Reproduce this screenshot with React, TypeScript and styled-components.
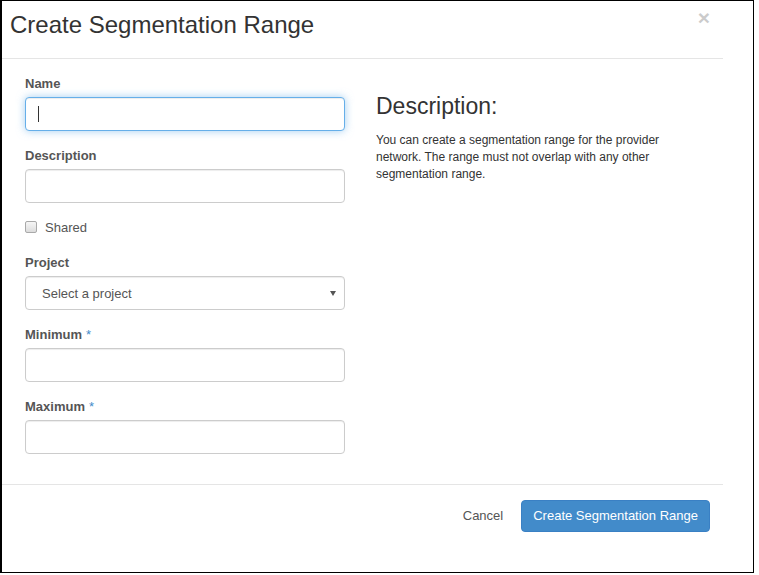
import React from 'react'
import styled, { createGlobalStyle } from 'styled-components'

const GlobalStyle = createGlobalStyle`
  html, body {
    margin: 0;
    padding: 0;
    background: #fff;
  }
  body {
    font-family: "Liberation Sans", Arial, Helvetica, sans-serif;
    color: #333;
  }
`

const Frame = styled.div`
  box-sizing: border-box;
  width: 754px;
  height: 573px;
  border: 1px solid #000;
  border-left-width: 2px;
  overflow: hidden;
  background: #fff;
`

const Modal = styled.div`
  width: 721px;
`

const Header = styled.div`
  box-sizing: border-box;
  height: 58px;
  display: flex;
  justify-content: space-between;
  align-items: flex-start;
  padding: 11px 13px 0 8px;
  border-bottom: 1px solid #e5e5e5;
`

const Title = styled.h4`
  margin: 0;
  font-size: 24px;
  line-height: 26px;
  font-weight: 400;
  color: #333;
`

const CloseButton = styled.button`
  margin-top: -5px;
  padding: 0;
  border: 0;
  background: transparent;
  font-family: inherit;
  font-size: 21px;
  font-weight: bold;
  line-height: 1;
  color: #000;
  opacity: 0.2;
  cursor: pointer;
`

const Body = styled.div`
  display: grid;
  grid-template-columns: 320px 1fr;
  column-gap: 31px;
  padding: 15px 23px;
`

const FormColumn = styled.div`
  display: flex;
  flex-direction: column;
`

const FormGroup = styled.div`
  margin-bottom: 15px;
`

const Label = styled.label`
  display: block;
  padding-top: 1px;
  margin-bottom: 4px;
  font-size: 13px;
  line-height: 18px;
  font-weight: bold;
  color: #555;
`

const Required = styled.span`
  margin-left: 4px;
  font-weight: normal;
  color: #428bca;
`

const TextBox = styled.div<{ $focused?: boolean }>`
  box-sizing: border-box;
  width: 320px;
  height: 34px;
  display: flex;
  align-items: center;
  padding: 0 12px;
  border: 1px solid ${(p) => (p.$focused ? '#66afe9' : '#ccc')};
  border-radius: 4px;
  background: #fff;
  box-shadow: ${(p) =>
    p.$focused
      ? 'inset 0 1px 1px rgba(0,0,0,.075), 0 0 8px rgba(102,175,233,.6)'
      : 'inset 0 1px 1px rgba(0,0,0,.075)'};
`

const Caret = styled.span`
  width: 1px;
  height: 16px;
  margin-top: -1px;
  background: #333;
`

const SelectBox = styled(TextBox)`
  justify-content: space-between;
  padding: 0 8px 0 16px;
  font-size: 13px;
  color: #555;
`

const CheckRow = styled.label`
  display: flex;
  align-items: center;
  gap: 8px;
  height: 18px;
  margin-bottom: 17px;
  font-size: 13px;
  color: #555;
`

const CheckBox = styled.span`
  box-sizing: border-box;
  width: 12px;
  height: 12px;
  border: 1px solid #a9a9a9;
  border-radius: 2px;
  background: linear-gradient(#f6f6f6, #dcdcdc);
`

const InfoColumn = styled.div`
  color: #333;
`

const InfoTitle = styled.h3`
  margin: 20px 0 13px;
  font-size: 23px;
  line-height: 25px;
  font-weight: 400;
`

const InfoText = styled.p`
  margin: 0;
  font-size: 12px;
  line-height: 17px;
`

const Footer = styled.div`
  display: flex;
  justify-content: flex-end;
  align-items: center;
  gap: 6px;
  padding: 15px 13px 0;
  border-top: 1px solid #e5e5e5;
`

const Button = styled.button<{ $primary?: boolean }>`
  padding: 6px 11px;
  font-family: inherit;
  font-size: 13px;
  line-height: 18px;
  border-radius: 4px;
  border: 1px solid ${(p) => (p.$primary ? '#3a80c4' : 'transparent')};
  background: ${(p) => (p.$primary ? '#428bca' : 'transparent')};
  color: ${(p) => (p.$primary ? '#fff' : '#555')};
  cursor: pointer;
`

const App: React.FC = () => {
  return (
    <Frame>
      <GlobalStyle />
      <Modal>
        <Header>
          <Title>Create Segmentation Range</Title>
          <CloseButton aria-label="Close">×</CloseButton>
        </Header>

        <Body>
          <FormColumn>
            <FormGroup>
              <Label>Name</Label>
              <TextBox $focused>
                <Caret />
              </TextBox>
            </FormGroup>
            <FormGroup>
              <Label>Description</Label>
              <TextBox />
            </FormGroup>
            <CheckRow>
              <CheckBox />
              Shared
            </CheckRow>
            <FormGroup>
              <Label>Project</Label>
              <SelectBox>
                <span>Select a project</span>
                <svg width="6" height="5" viewBox="0 0 6 5">
                  <polygon points="0,0 6,0 3,5" fill="#555" />
                </svg>
              </SelectBox>
            </FormGroup>
            <FormGroup>
              <Label>
                Minimum<Required>*</Required>
              </Label>
              <TextBox />
            </FormGroup>
            <FormGroup>
              <Label>
                Maximum<Required>*</Required>
              </Label>
              <TextBox />
            </FormGroup>
          </FormColumn>

          <InfoColumn>
            <InfoTitle>Description:</InfoTitle>
            <InfoText>
              You can create a segmentation range for the provider network. The range must not
              overlap with any other segmentation range.
            </InfoText>
          </InfoColumn>
        </Body>

        <Footer>
          <Button>Cancel</Button>
          <Button $primary>Create Segmentation Range</Button>
        </Footer>
      </Modal>
    </Frame>
  )
}

export default App
